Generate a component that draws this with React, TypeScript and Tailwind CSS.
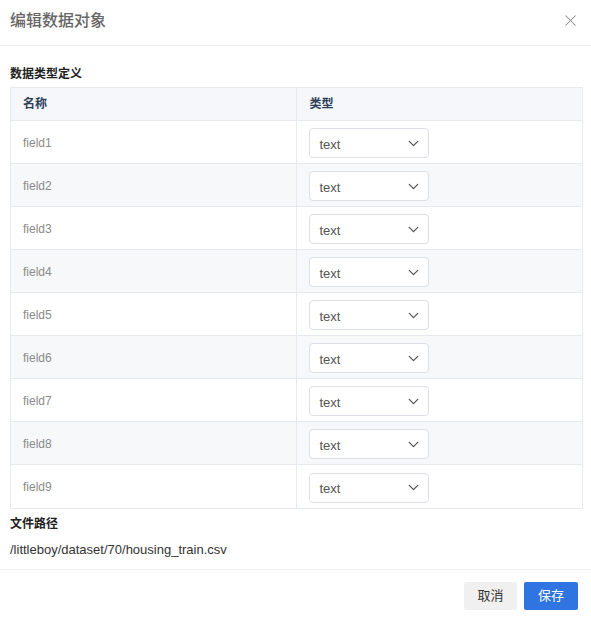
import { ChevronDown, X } from 'lucide-react';

const fields = ['field1', 'field2', 'field3', 'field4', 'field5', 'field6', 'field7', 'field8', 'field9'];

export default function App() {
  return (
    <div
      className="w-[591px] h-[617px] bg-white text-[#333] flex flex-col"
      style={{ fontFamily: '"Liberation Sans", "Noto Sans CJK SC", sans-serif' }}
    >
      <div className="h-[46px] flex items-center justify-between px-[10px] border-b border-[#ebeef5] shrink-0">
        <span className="text-[16px] text-[#666] font-medium pb-[4px]">编辑数据对象</span>
        <X className="w-[19px] h-[19px] text-[#888] mr-[1px] mb-[5px]" strokeWidth={1.3} />
      </div>

      <div className="px-[10px] pt-[19px] flex-1">
        <div className="text-[12px] font-bold text-[#222] leading-[18px] mb-[4px]">数据类型定义</div>
        <div className="border border-[#e6e9ee] w-[573px]">
          <div className="grid grid-cols-2 h-[33px] bg-[#f5f7fa] border-b border-[#e6e9ee] text-[12px] font-bold text-[#2c3e58]">
            <div className="flex items-center pl-[12px] border-r border-[#e6e9ee]">名称</div>
            <div className="flex items-center pl-[13px]">类型</div>
          </div>
          {fields.map((f, i) => (
            <div
              key={f}
              className={`grid grid-cols-2 h-[43px] ${i < fields.length - 1 ? 'border-b border-[#e6e9ee]' : ''} ${i % 2 === 1 ? 'bg-[#f7f8fa]' : 'bg-white'}`}
            >
              <div className="flex items-center pl-[12px] border-r border-[#e6e9ee] text-[12px] text-[#8a8a8a] pt-[1px]">{f}</div>
              <div className="flex items-center pl-[12px] pt-[2px]">
                <div className="w-[120px] h-[30px] rounded-[4px] border border-[#dcdfe6] bg-white flex items-center justify-between pl-[10px] pr-[6px]">
                  <span className="text-[13px] text-[#555] pt-[3px]">text</span>
                  <ChevronDown className="w-[17px] h-[17px] text-[#555]" strokeWidth={1.8} />
                </div>
              </div>
            </div>
          ))}
        </div>
        <div className="text-[12px] font-bold text-[#222] mt-[6px] leading-[18px]">文件路径</div>
        <div className="text-[13px] text-[#333] mt-[8px] leading-[18px]">/littleboy/dataset/70/housing_train.csv</div>
      </div>

      <div className="border-t border-[#ebeef5] h-[48px] shrink-0 flex items-start justify-end gap-[7px] pr-[13px] pt-[12px]">
        <button className="w-[53px] h-[28px] rounded-[2px] bg-[#f0f0f0] text-[13px] text-[#333]">取消</button>
        <button className="w-[54px] h-[28px] rounded-[2px] bg-[#2f74e0] text-[13px] text-white">保存</button>
      </div>
    </div>
  );
}
